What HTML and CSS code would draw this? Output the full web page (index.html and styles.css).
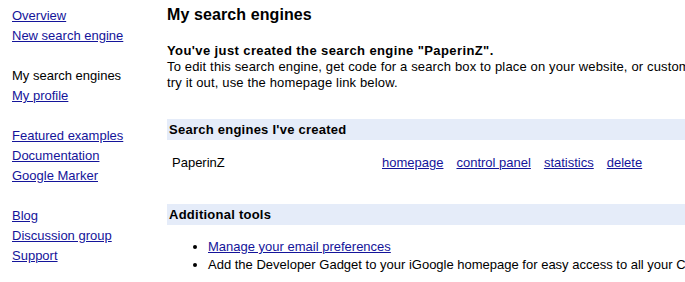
FILE: index.html
```html
<!DOCTYPE html>
<html lang="en">
<head>
    <meta charset="UTF-8">
    <title>My search engines</title>
    <link rel="stylesheet" href="styles.css">
</head>
<body>
    <div class="page">
        <div class="sidebar">
            <div class="nav-group">
                <a href="#">Overview</a>
                <a href="#">New search engine</a>
            </div>
            <div class="nav-group">
                <span class="current">My search engines</span>
                <a href="#">My profile</a>
            </div>
            <div class="nav-group">
                <a href="#">Featured examples</a>
                <a href="#">Documentation</a>
                <a href="#">Google Marker</a>
            </div>
            <div class="nav-group">
                <a href="#">Blog</a>
                <a href="#">Discussion group</a>
                <a href="#">Support</a>
            </div>
        </div>

        <div class="main">
            <h1>My search engines</h1>

            <div class="notice">
                <b>You've just created the search engine "PaperinZ".</b><br>
                To edit this search engine, get code for a search box to place on your website, or customize its look and feel, click control panel. To<br>
                try it out, use the homepage link below.
            </div>

            <div class="section-title">Search engines I've created</div>
            <div class="engine-row">
                <div class="engine-name">PaperinZ</div>
                <div class="engine-links">
                    <a href="#">homepage</a>
                    <a href="#">control panel</a>
                    <a href="#">statistics</a>
                    <a href="#">delete</a>
                </div>
            </div>

            <div class="section-title">Additional tools</div>
            <ul class="tools">
                <li><a href="#">Manage your email preferences</a></li>
                <li>Add the Developer Gadget to your iGoogle homepage for easy access to all your Custom Search Engines.</li>
            </ul>
        </div>
    </div>
</body>
</html>
```

FILE: styles.css
```css
body {
    font-family: Arial, "Liberation Sans", sans-serif;
    font-size: 13px;
    color: #000;
    background-color: #fff;
    margin: 0;
}
a {
    color: #14149a;
}
b {
    letter-spacing: 0.4px;
}
.page {
    display: flex;
    white-space: nowrap;
    overflow: hidden;
}
.sidebar {
    flex: 0 0 167px;
    padding: 6px 0 0 12px;
    box-sizing: border-box;
}
.nav-group {
    display: flex;
    flex-direction: column;
    align-items: flex-start;
    line-height: 20px;
    margin-bottom: 20px;
}
.main {
    flex: 1;
    min-width: 0;
    padding-top: 5px;
}
h1 {
    font-size: 16px;
    margin: 0 0 18px;
    line-height: 20px;
    letter-spacing: 0.1px;
}
.notice {
    line-height: 16px;
    margin-bottom: 28px;
    letter-spacing: 0.15px;
}
.section-title {
    background-color: #e5ecf9;
    font-weight: bold;
    padding: 0 2px;
    line-height: 21px;
    letter-spacing: 0.25px;
}
.engine-row {
    display: flex;
    padding: 13px 0 31px 5px;
    line-height: 20px;
}
.engine-name {
    width: 210px;
}
.engine-links {
    display: flex;
    gap: 13px;
}
.tools {
    margin: 13px 0 0;
    padding-left: 41px;
    line-height: 18px;
}
```
